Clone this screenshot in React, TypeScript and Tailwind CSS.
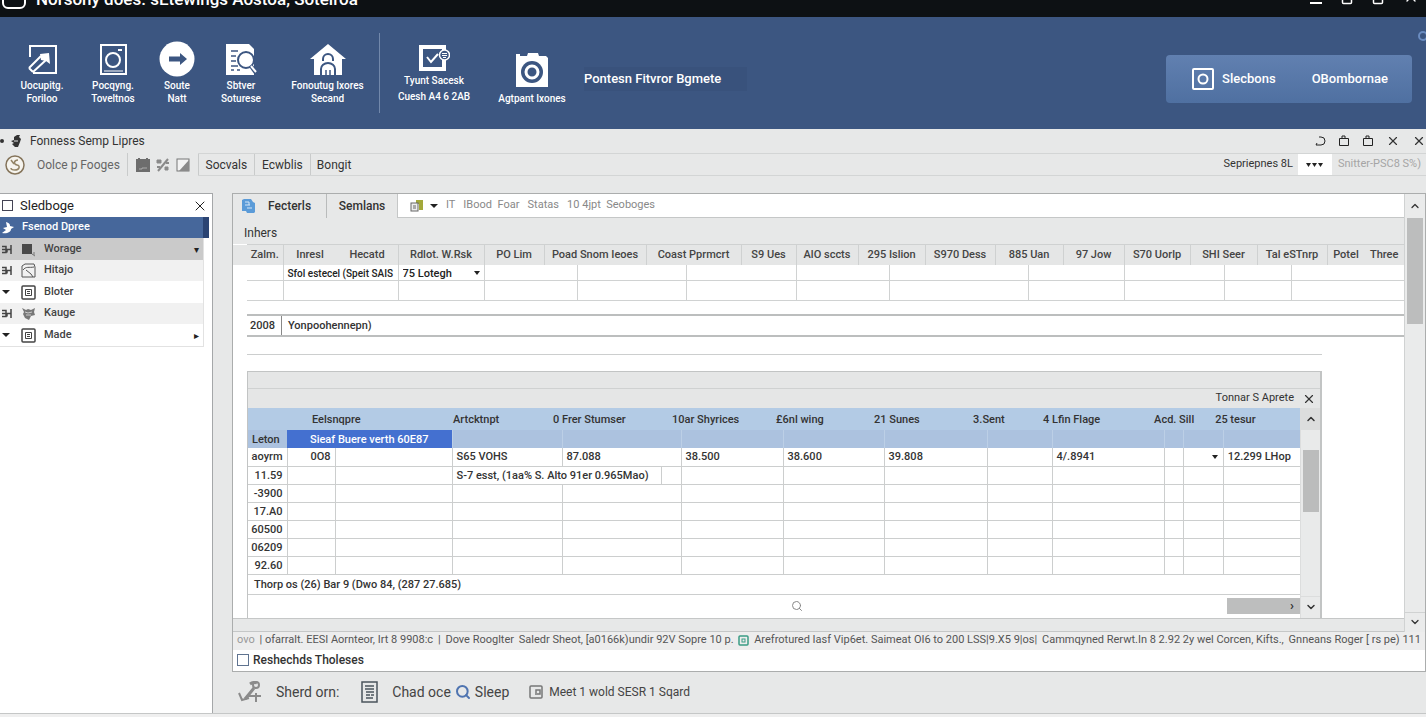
import type { ReactNode } from "react";
import { ChevronDown, ChevronUp, Search, Square, X } from "lucide-react";

interface CellData {
  from: number;
  to: number;
  text?: ReactNode;
}

// Column edges of a table whose header and body cells do not line up.
const makeEdges = (...lists: number[][]) =>
  Array.from(new Set(lists.flat())).sort((a, b) => a - b);

const spanOf = (edges: number[], from: number, to: number) =>
  edges.filter((edge) => edge > from && edge <= to).length;

const Columns = ({ edges }: { edges: number[] }) => (
  <colgroup>
    {edges.slice(1).map((edge, index) => (
      <col key={edge} style={{ width: edge - edges[index] }} />
    ))}
  </colgroup>
);

const toCells = (edges: number[], texts: ReactNode[]): CellData[] =>
  edges.slice(1).map((edge, index) => ({ from: edges[index], to: edge, text: texts[index] }));

/* ---------- icons ---------- */

const DrawIcon = () => (
  <svg viewBox="0 0 31 31" className="h-[31px] w-[31px]" fill="none" stroke="white" strokeWidth="2">
    <path d="M3 13V2h26v27H6" />
    <path d="M2 24 14 12M6 28 19 16M2 24l4 4" />
    <path d="M13 10l9-1 1 11-4-3-5-1z" fill="white" stroke="none" />
  </svg>
);

const CameraFrameIcon = () => (
  <svg viewBox="0 0 27 31" className="h-[31px] w-[27px]" fill="none" stroke="white">
    <rect x="1" y="1" width="25" height="29" strokeWidth="2" />
    <circle cx="13" cy="16" r="7" strokeWidth="2" />
    <path d="M18 6h4" strokeWidth="2" />
    <path d="M4 27h19" strokeWidth="1" />
  </svg>
);

const ArrowCircleIcon = () => (
  <svg viewBox="0 0 36 36" className="h-9 w-9">
    <circle cx="18" cy="18" r="17.5" fill="white" />
    <path d="M10 15.5h11V12l7 6-7 6v-3.5H10z" fill="#3c5681" />
  </svg>
);

const DocSearchIcon = () => (
  <svg viewBox="0 0 32 31" className="h-[31px] w-8">
    <path d="M1 0h23l5 5v26H1z" fill="white" />
    <path d="M6 7h7M6 12h5M6 17h5M6 22h7M6 26h3M12 26h3" stroke="#3c5681" strokeWidth="1.5" />
    <circle cx="21" cy="16" r="8" fill="white" stroke="#3c5681" strokeWidth="2" />
    <path d="M26 22l5 7" stroke="#3c5681" strokeWidth="4" />
    <path d="M26 22l5 6" stroke="white" strokeWidth="2" />
  </svg>
);

const HomeIcon = () => (
  <svg viewBox="0 0 36 31" className="h-[31px] w-9">
    <path d="M18 0 36 15h-4v16H4V15H0z" fill="white" />
    <path d="M13 17v-2a5 5 0 0 1 10 0v2" fill="none" stroke="#3c5681" strokeWidth="2" />
    <path d="M11 31v-6a7 6 0 0 1 14 0v6" fill="none" stroke="#3c5681" strokeWidth="2" />
    <path d="M16 31v-5M20 31v-5" fill="none" stroke="#3c5681" strokeWidth="1.5" />
  </svg>
);

const CheckBadgeIcon = () => (
  <svg viewBox="0 0 31 26" className="h-[26px] w-[31px]" fill="none" stroke="white">
    <rect x="2" y="2" width="23" height="22" strokeWidth="4" />
    <path d="M8 12l4 5 7-8" strokeWidth="2" />
    <circle cx="25.5" cy="10" r="5" fill="#3c5681" strokeWidth="1.5" />
    <path d="M23 8.5h5M23 10.5h5M24 12.5h3" strokeWidth="1" />
  </svg>
);

const CameraIcon = () => (
  <svg viewBox="0 0 32 35" className="h-[35px] w-8">
    <path d="M0 1h4v2h7l1-3h10l1 3h7l2 2v29H0z" fill="white" />
    <circle cx="16" cy="19" r="11" fill="#3c5681" />
    <circle cx="16" cy="19" r="6" fill="none" stroke="white" strokeWidth="3" />
  </svg>
);

const TargetIcon = () => (
  <svg viewBox="0 0 22 22" className="h-[22px] w-[22px]" fill="none" stroke="white" strokeWidth="2">
    <rect x="1" y="1" width="20" height="20" rx="1" />
    <circle cx="11" cy="11" r="4.5" />
  </svg>
);

const BugIcon = () => (
  <svg viewBox="0 0 12 12" className="h-3 w-3" fill="#333">
    <path d="M7 0h3l-1 2 2 2-1 3-2 5H5L2 9l2-1-3-2 3-1V2z" />
    <path d="M4 6h4" stroke="#e7e8e8" strokeWidth="1" />
  </svg>
);

const CoinIcon = () => (
  <svg viewBox="0 0 20 20" className="h-5 w-5" fill="none">
    <circle cx="10" cy="10" r="9" stroke="#85745a" strokeWidth="1.5" fill="#f6f4ee" />
    <path d="M6 5l3 4M13 5c-4 0-5 4-1 5s2 5-2 5-4-2-4-2" stroke="#948567" strokeWidth="1.5" />
  </svg>
);

const NoteIcon = () => (
  <svg viewBox="0 0 14 14" className="h-[14px] w-[14px]">
    <path d="M0 1h2V0h2v1h6V0h2v1h2v13H0z" fill="#6d6d6d" />
    <path d="M3 11h3v-1h5" stroke="#aaa" fill="none" />
  </svg>
);

const SplitIcon = () => (
  <svg viewBox="0 0 14 14" className="h-[14px] w-[14px]" fill="none" stroke="#8a8a8a">
    <path d="M2 13 12 1" strokeWidth="2" />
    <path d="M1 2h4v3H1zM9 9h3v3H9z" fill="#8a8a8a" />
    <path d="M10 5h3M1 9h3" strokeWidth="2" />
  </svg>
);

const ContrastIcon = () => (
  <svg viewBox="0 0 14 14" className="h-[14px] w-[14px]">
    <rect x="1" y="1" width="12" height="12" fill="#f3f3f3" stroke="#777" />
    <path d="M13 2v11H3z" fill="#8a8a8a" />
  </svg>
);

const BlueDocsIcon = () => (
  <svg viewBox="0 0 15 14" className="h-[14px] w-[15px]">
    <path d="M1 1l2-1h7l2 3 2 1v9l-1 1H6l-1-2H1z" fill="#5b9bd8" />
    <path d="M4 3h4v3M4 6h5M6 9h5" stroke="#d5e6f7" fill="none" />
  </svg>
);

const SheetColorIcon = () => (
  <svg viewBox="0 0 14 12" className="h-3 w-[14px]">
    <path d="M6 0h7v10H9V4H6z" fill="#a3a83a" />
    <rect x="1" y="3" width="7" height="8" fill="#eee" stroke="#666" />
    <path d="M3 6h3M3 8h3" stroke="#666" />
  </svg>
);

const FrameIcon = () => (
  <svg viewBox="0 0 15 15" className="h-[15px] w-[15px]" fill="none" stroke="#444">
    <rect x="1" y="1" width="13" height="13" rx="1" strokeWidth="1.5" />
    <path d="M4.5 4.5h6v6h-6zM6 6.5h3M6 8.5h3" />
  </svg>
);

const PictureIcon = () => (
  <svg viewBox="0 0 15 15" className="h-[15px] w-[15px]" fill="none" stroke="#555">
    <path d="M1 3l3-2h9l1 3v10H1zM2 7c3-4 6-2 11-3M5 7l5 4 2 3" />
  </svg>
);

const BlockIcon = () => (
  <svg viewBox="0 0 15 15" className="h-[15px] w-[15px]">
    <rect x="1" y="2" width="10" height="10" fill="#4a4a4a" />
    <path d="M11 12l3 2M13 10v3" stroke="#777" />
  </svg>
);

const PawIcon = () => (
  <svg viewBox="0 0 15 15" className="h-[15px] w-[15px]" fill="#777">
    <path d="M1 2l4 2 2-1 3 1 4-2-1 4 1 3-4 1-2 4-4-2-2-4 1-2z" />
    <path d="M4 6l3 1 4-1M5 9h5" stroke="#ccc" fill="none" />
  </svg>
);

const TreeIcon = () => (
  <svg viewBox="0 0 10 9" className="h-[9px] w-[10px]" fill="none" stroke="#444">
    <path d="M0 1.5h4v6H0M0 4.5h9M5 7.5V5M9 0v9" strokeWidth="1.5" />
  </svg>
);

const BirdIcon = () => (
  <svg viewBox="0 0 12 12" className="h-3 w-3" fill="white">
    <path d="M4 0c4 1 4 3 4 4l4 1-3 2c0 3-4 5-9 4l4-3-3-2 4-1z" />
  </svg>
);

const Caret = ({ size = "h-[5px] w-2" }: { size?: string }) => (
  <svg viewBox="0 0 8 5" className={size} fill="#222" preserveAspectRatio="none">
    <path d="M0 0h8L4 5z" />
  </svg>
);

const BagIcon = () => (
  <svg viewBox="0 0 12 12" className="h-3 w-3" fill="none" stroke="#222">
    <path d="M1.5 3.5h9v7h-9zM4 3V1h3v2" />
  </svg>
);

const ReturnIcon = () => (
  <svg viewBox="0 0 12 12" className="h-3 w-3" fill="none" stroke="#222">
    <path d="M5 2h2a3.5 3.5 0 0 1 0 8H2M3 8l-1 2" />
  </svg>
);

const BranchIcon = () => (
  <svg viewBox="0 0 24 22" className="h-[22px] w-6" fill="none" stroke="#8b8b8b">
    <circle cx="18" cy="4" r="3" strokeWidth="2" />
    <path d="M12 3c3-2 5-2 7-1M16 7l-4 5-5 6" strokeWidth="3" />
    <path d="M1 12l3 7 7-2M9 15h14M18 12v9" strokeWidth="2" />
  </svg>
);

const PageIcon = () => (
  <svg viewBox="0 0 17 22" className="h-[22px] w-[17px]" fill="none" stroke="#4b545c">
    <rect x="1" y="1" width="15" height="20" strokeWidth="1.5" />
    <path d="M4 5h9M4 8h9M5 11h8M5 14h4M10 14h3M5 17h7" strokeWidth="1.5" />
  </svg>
);

/* ---------- ribbon ---------- */

interface RibbonItemProps {
  icon: ReactNode;
  lines: string[];
  className: string;
}

const RibbonItem = ({ icon, lines, className }: RibbonItemProps) => (
  <button type="button" className={`flex shrink-0 flex-col items-center justify-end ${className}`}>
    {icon}
    <span className="flex flex-col items-center whitespace-nowrap">
      {lines.map((line) => (
        <span key={line}>{line}</span>
      ))}
    </span>
  </button>
);

const Ribbon = () => (
  <div className="relative flex h-28 items-center overflow-hidden bg-[#3c5681] pl-1.5 text-white">
    <div className="flex h-full pb-6 text-[10px] leading-[13px] font-medium">
      <RibbonItem className="w-[72px] gap-1" icon={<DrawIcon />} lines={["Uocupitg.", "Foriloo"]} />
      <RibbonItem className="w-[70px] gap-1" icon={<CameraFrameIcon />} lines={["Pocqyng.", "Toveltnos"]} />
      <RibbonItem className="w-[58px] gap-0.5" icon={<ArrowCircleIcon />} lines={["Soute", "Natt"]} />
      <RibbonItem className="w-[70px] gap-1" icon={<DocSearchIcon />} lines={["Sbtver", "Soturese"]} />
      <RibbonItem className="w-[103px] gap-1" icon={<HomeIcon />} lines={["Fonoutug Ixores", "Secand"]} />
    </div>
    <div className="h-20 w-px bg-[#7288ab]" />
    <div className="flex h-full pb-6 text-[10px] leading-[13px] font-medium">
      <RibbonItem className="w-[108px] gap-0.5 leading-4" icon={<CheckBadgeIcon />} lines={["Tyunt Sacesk", "Cuesh A4 6 2AB"]} />
      <RibbonItem className="w-[88px] gap-1" icon={<CameraIcon />} lines={["Agtpant Ixones"]} />
    </div>
    <button type="button" className="mt-3 ml-2 h-6 w-[163px] bg-[#39527c] text-left text-[13px] font-medium">
      Pontesn Fitvror Bgmete
    </button>
    <div className="mt-3 mr-3.5 ml-auto flex h-12 items-center rounded bg-linear-to-b from-[#6180b0] to-[#4f70a1] pr-6 pl-[26px] text-[13px] font-medium">
      <button type="button" className="flex items-center gap-2">
        <TargetIcon />
        Slecbons
      </button>
      <button type="button" className="ml-9">OBombornae</button>
    </div>
    <span className="absolute top-3.5 -right-0.5 h-2.5 w-2.5 rounded-full border-2 border-[#6a8cc0]" />
  </div>
);

/* ---------- sidebar ---------- */

const sideRows = [
  { mark: <TreeIcon />, icon: <BlockIcon />, label: "Worage", bg: "bg-[#cacaca]", end: "▾" },
  { mark: <TreeIcon />, icon: <PictureIcon />, label: "Hitajo", bg: "bg-[#f1f1f1]", end: "" },
  { mark: <Caret size="h-1 w-2" />, icon: <FrameIcon />, label: "Bloter", bg: "bg-white", end: "" },
  { mark: <TreeIcon />, icon: <PawIcon />, label: "Kauge", bg: "bg-[#f1f1f1]", end: "" },
  { mark: <Caret size="h-1 w-2" />, icon: <FrameIcon />, label: "Made", bg: "bg-white", end: "▸" },
];

const Sidebar = () => (
  <aside className="w-[213px] shrink-0 border-t border-r border-[#a5a7a9] bg-white">
    <div className="flex h-[23px] items-center pr-1 pl-0.5">
      <label className="flex items-center gap-[7px] text-[13px]">
        <input type="checkbox" className="h-[11px] w-[11px] appearance-none border border-[#445] bg-white" />
        Sledboge
      </label>
      <button type="button" aria-label="Close panel" className="ml-auto">
        <X className="h-4 w-4" strokeWidth={1.5} />
      </button>
    </div>
    <button
      type="button"
      className="flex h-[21px] w-[209px] items-center gap-2 border-r-[6px] border-[#2b4473] bg-[#46679b] pl-0.5 text-[11px] font-medium text-white"
    >
      <BirdIcon />
      Fsenod Dpree
    </button>
    <ul className="w-[204px] border-r border-b border-[#e2e2e2] text-[11px] font-medium text-[#444]">
      {sideRows.map((row) => (
        <li key={row.label} className={`flex h-[22px] items-center even:h-[21px] ${row.bg}`}>
          <span className="flex w-[21px] justify-start pl-0.5">{row.mark}</span>
          <button type="button" className="flex flex-1 items-center gap-2">
            {row.icon}
            {row.label}
          </button>
          <span className="pr-1 text-[10px] text-[#222]">{row.end}</span>
        </li>
      ))}
    </ul>
  </aside>
);

/* ---------- upper table ---------- */

const upperHeadEdges = [233, 247, 283, 398, 484, 544, 646, 741, 796, 858, 925, 995, 1063, 1124, 1190, 1257, 1327, 1404];
const upperBodyEdges = [233, 247, 283, 398, 484, 577, 686, 796, 889, 1028, 1124, 1224, 1291, 1404];
const upperEdges = makeEdges(upperHeadEdges, upperBodyEdges);

const upperHead = toCells(upperHeadEdges, [
  "",
  "Zalm.",
  <span className="flex justify-around"><span>Inresl</span><span>Hecatd</span></span>,
  "Rdlot. W.Rsk",
  "PO Lim",
  "Poad Snom Ieoes",
  "Coast Pprmcrt",
  "S9 Ues",
  "AlO sccts",
  "295 Islion",
  "S970 Dess",
  "885 Uan",
  "97 Jow",
  "S70 Uorlp",
  "SHI Seer",
  "Tal eSTnrp",
  <span className="flex justify-around"><span>Potel</span><span>Three</span></span>,
]);

const upperBody = toCells(upperBodyEdges, [
  "",
  "",
  <span className="pl-1 text-[10px]">Sfol estecel (Speit SAIS</span>,
  <span className="relative block">
    <select aria-label="Lot" className="block w-full appearance-none bg-transparent pl-1 outline-none">
      <option>75 Lotegh</option>
    </select>
    <span className="absolute top-1 right-1"><Caret size="h-1 w-1.5" /></span>
  </span>,
]);

const UpperTable = () => (
  <table className="w-full table-fixed border-collapse text-[11px] leading-[13px] font-medium text-[#444]">
    <Columns edges={upperEdges} />
    <thead>
      <tr className="h-5 bg-[#e5e6e6]">
        {upperHead.map((cell, index) => (
          <th
            key={cell.from}
            colSpan={spanOf(upperEdges, cell.from, cell.to)}
            className={`border-[#cfd1d1] p-0 text-center font-medium whitespace-nowrap ${index ? "border-t" : ""} ${index > 1 ? "border-l" : ""}`}
          >
            {cell.text}
          </th>
        ))}
      </tr>
    </thead>
    <tbody>
      {[0, 1].map((row) => (
        <tr key={row} className={row ? "h-5" : "h-4"}>
          {upperBody.map((cell, index) => (
            <td
              key={cell.from}
              colSpan={spanOf(upperEdges, cell.from, cell.to)}
              className={`border-[#d0d2d2] p-0 align-bottom whitespace-nowrap text-[#222] ${index ? "border-b" : ""} ${index > 1 ? "border-l" : ""}`}
            >
              {row === 0 ? cell.text : null}
            </td>
          ))}
        </tr>
      ))}
    </tbody>
  </table>
);

/* ---------- lower table ---------- */

const lowerHeadEdges = [248, 312, 453, 553, 672, 776, 874, 973, 1043, 1154, 1215, 1300];
const lowerBodyEdges = [248, 287, 335, 452, 562, 681, 783, 884, 987, 1052, 1164, 1183, 1223, 1300];
const lowerEdges = makeEdges(lowerHeadEdges, lowerBodyEdges, [661]);

const lowerHead = toCells(lowerHeadEdges, [
  "",
  "Eelsnqpre",
  "Artcktnpt",
  "0 Frer Stumser",
  "10ar Shyrices",
  "£6nl wing",
  "21 Sunes",
  "3.Sent",
  "4 Lfin Flage",
  "Acd. Sill",
  "25 tesur",
]);

const lowerFirst = toCells(lowerBodyEdges, [
  "aoyrm",
  "0O8",
  "",
  "S65 VOHS",
  "87.088",
  "38.500",
  "38.600",
  "39.808",
  "",
  "4/.8941",
  "",
  <button type="button" aria-label="Open list" className="ml-auto flex h-4 w-4 items-center justify-center"><Caret size="h-1 w-1.5" /></button>,
  "12.299 LHop",
]);

const noteRow: CellData[] = [
  ...toCells([248, 287, 335, 452], ["11.59"]),
  { from: 452, to: 661, text: "S-7 esst, (1aa% S. Alto 91er 0.965Mao)" },
  ...toCells([661, 681, 783, 884, 987, 1052, 1164, 1183, 1223, 1300], []),
];

const lowerRows: CellData[][] = [
  lowerFirst,
  noteRow,
  ...["-3900", "17.A0", "60500", "06209", "92.60"].map((code) => toCells(lowerBodyEdges, [code])),
];

const LowerTable = () => (
  <table className="w-full table-fixed border-collapse text-[11px] leading-[13px] font-medium text-[#333]">
    <Columns edges={lowerEdges} />
    <thead>
      <tr className="h-[22px] bg-[#b3cbe5]">
        {lowerHead.map((cell) => (
          <th
            key={cell.from}
            colSpan={spanOf(lowerEdges, cell.from, cell.to)}
            className="p-0 text-left font-medium whitespace-nowrap"
          >
            {cell.text}
          </th>
        ))}
      </tr>
      <tr className="h-[18px] bg-[#acc2df]">
        <th colSpan={spanOf(lowerEdges, 248, 287)} className="p-0 pl-1 text-left font-medium">Leton</th>
        <th colSpan={spanOf(lowerEdges, 287, 452)} className="bg-[#4470d0] p-0 text-center font-medium text-white">
          Sieaf Buere verth 60E87
        </th>
        {toCells(lowerBodyEdges.slice(3), []).map((cell) => (
          <th
            key={cell.from}
            colSpan={spanOf(lowerEdges, cell.from, cell.to)}
            className="border-l border-[#bccfe6] p-0"
          />
        ))}
      </tr>
    </thead>
    <tbody>
      {lowerRows.map((row, rowIndex) => (
        <tr key={rowIndex} className="h-[18px]">
          {row.map((cell, index) => (
            <td
              key={cell.from}
              colSpan={spanOf(lowerEdges, cell.from, cell.to)}
              className={`border-b border-[#cccece] p-0 whitespace-nowrap ${index ? "border-l" : ""} ${index < 2 ? "pr-1 text-right" : "pl-1"}`}
            >
              {cell.text}
            </td>
          ))}
        </tr>
      ))}
      <tr className="h-5">
        <td colSpan={lowerEdges.length - 1} className="border-b border-[#cccece] p-0 pl-1.5">
          Thorp os (26) Bar 9 (Dwo 84, (287 27.685)
        </td>
      </tr>
    </tbody>
  </table>
);

const DataWindow = () => (
  <section className="mt-4 mr-[82px] border-t border-r-2 border-l border-[#c2c4c4]">
    <div className="h-[17px] border-b border-[#cfd1d1] bg-[#e5e6e6]" />
    <div className="flex h-[19px] items-center justify-end gap-2 bg-[#e5e6e6] pr-1 text-[11px] text-[#333]">
      Tonnar S Aprete
      <button type="button" aria-label="Close window">
        <X className="h-3.5 w-3.5" strokeWidth={2} />
      </button>
    </div>
    <div className="flex">
      <div className="min-w-0 flex-1">
        <LowerTable />
        <div className="flex h-[23px] items-center pl-[46px]">
          <div className="flex-1" />
          <Search className="h-3 w-3 text-[#888]" />
          <div className="flex flex-1 justify-end">
            <button type="button" aria-label="Scroll right" className="h-4 w-[73px] bg-[#bdbebe] pr-1.5 text-right text-[13px] leading-3 font-bold text-[#333]">
              ›
            </button>
          </div>
        </div>
      </div>
      <div className="flex w-5 shrink-0 flex-col items-center border-l border-[#dcdddd] bg-[#e9eaea]">
        <button type="button" aria-label="Scroll up" className="flex h-[22px] w-full items-center justify-center bg-[#dcdddd]">
          <ChevronUp className="h-3 w-3" strokeWidth={3} />
        </button>
        <div className="mt-5 h-[62px] w-4 bg-[#bbbcbc]" />
        <button type="button" aria-label="Scroll down" className="mt-auto flex h-[22px] w-full items-center justify-center border-t border-[#dcdddd]">
          <ChevronDown className="h-3 w-3" strokeWidth={3} />
        </button>
      </div>
    </div>
  </section>
);

/* ---------- main panel ---------- */

const TabBar = () => (
  <div className="flex h-6 items-stretch text-[12px] font-medium">
    <button type="button" className="flex w-[94px] items-center gap-3 border-r border-[#b9bbbb] pl-2">
      <BlueDocsIcon />
      Fecterls
    </button>
    <button type="button" className="flex w-[70px] items-center justify-center">Semlans</button>
    <div className="flex flex-1 items-center gap-2 border-b border-l border-[#c5c7c7] bg-white pl-3">
      <button type="button" aria-label="Sheet type" className="flex items-center gap-1.5">
        <SheetColorIcon />
        <Caret size="h-1 w-2" />
      </button>
      <input
        type="text"
        aria-label="Sheet address"
        defaultValue="IT   IBood  Foar   Statas   10 4jpt  Seoboges"
        className="flex-1 text-[11px] font-normal text-[#888] outline-none"
      />
    </div>
  </div>
);

const StatusBar = () => (
  <div className="flex h-[18px] items-center justify-between gap-1 overflow-hidden bg-[#ededed] px-1 text-[11px] whitespace-nowrap text-[#555]">
    <span className="text-[#999]">ovo</span>
    <span>| ofarralt. EESI Aornteor, Irt 8 9908:c</span>
    <span>|</span>
    <span>Dove Rooglter</span>
    <span>Saledr Sheot, [a0166k)undir 92V Sopre 10 p.</span>
    <svg viewBox="0 0 11 11" className="h-[11px] w-[11px] shrink-0" fill="none" stroke="#3a9c84">
      <rect x="1" y="1" width="9" height="9" rx="1" strokeWidth="1.5" />
      <rect x="4" y="4" width="3" height="3" />
    </svg>
    <span>Arefrotured Iasf Vip6et. Saimeat OI6 to 200 LSS|9.X5 9|os|</span>
    <span>Cammqyned Rerwt.In 8 2.92 2y wel Corcen, Kifts.,</span>
    <span>Gnneans Roger [ rs pe) 111</span>
  </div>
);

const MainPanel = () => (
  <main className="flex min-w-0 flex-col border border-[#abadad] text-[#333]">
    <div className="flex">
      <div className="min-w-0 flex-1">
        <TabBar />
        <h2 className="flex h-[26px] items-center pt-1 pl-[11px] text-[12px] leading-4">Inhers</h2>
        <div className="bg-white">
          <UpperTable />
          <div className="mt-[13px] ml-3.5 flex h-[23px] items-stretch border-y-2 border-[#bcbebe] text-[11px] leading-[19px] font-medium">
            <span className="w-[35px] border-r border-[#888] pl-[3px]">2008</span>
            <span className="pl-1.5">Yonpoohennepn)</span>
          </div>
          <div className="mt-[17px] mr-[82px] ml-3.5 h-px bg-[#cccece]" />
          <div className="ml-3.5">
            <DataWindow />
          </div>
        </div>
        <div className="h-3.5 border-y border-[#c5c7c7]" />
      </div>
      <div className="flex w-[21px] shrink-0 flex-col items-center border-l border-[#d0d2d2] bg-[#eaebeb]">
        <button type="button" aria-label="Scroll up" className="flex h-6 w-full items-center justify-center">
          <ChevronUp className="h-3 w-3" strokeWidth={2.5} />
        </button>
        <div className="h-[106px] w-4 bg-[#bcbdbd]" />
        <button type="button" aria-label="Scroll down" className="mt-auto flex h-5 w-full items-center justify-center border-t border-[#d0d2d2]">
          <ChevronDown className="h-3 w-3" strokeWidth={2.5} />
        </button>
      </div>
    </div>
    <StatusBar />
    <div className="flex h-[21px] items-center bg-white pl-1">
      <label className="flex items-center gap-1 text-[12px] font-medium">
        <input type="checkbox" className="h-3 w-3 appearance-none border border-[#5f7390] bg-white" />
        Reshechds Tholeses
      </label>
    </div>
  </main>
);

const Footer = () => (
  <footer className="flex flex-1 items-center pl-1.5 text-[14px] text-[#444]">
    <BranchIcon />
    <span className="ml-3.5">Sherd orn:</span>
    <span className="ml-[22px]"><PageIcon /></span>
    <button type="button" className="ml-3.5">Chad oce</button>
    <button type="button" className="ml-1 flex items-center gap-1">
      <Search className="h-4 w-4 text-[#4f74b0]" strokeWidth={3} />
      Sleep
    </button>
    <button type="button" className="ml-5 flex items-center gap-1.5 text-[12px]">
      <svg viewBox="0 0 14 14" className="h-[14px] w-[14px]" fill="none" stroke="#777" strokeWidth="1.5">
        <rect x="1" y="1" width="12" height="12" rx="1" />
        <path d="M7 10V5h4v4H8" />
      </svg>
      Meet 1 wold SESR 1 Sqard
    </button>
  </footer>
);

/* ---------- page ---------- */

const TitleBar = () => (
  <header className="flex h-[17px] items-end overflow-hidden bg-[#0d1114] pb-2 pl-0.5 text-white">
    <span className="flex h-6 w-6 shrink-0 items-end justify-center rounded-md border-2 border-white pb-2">
      <span className="h-1 w-1 rounded-full bg-white" />
    </span>
    <h1 className="ml-2.5 text-[17px] leading-5 font-medium whitespace-nowrap">
      Norsony does. sEtewings Aostoa, Soteiroa
    </h1>
    <div className="mr-[7px] mb-1 ml-auto flex items-end gap-[19px]">
      <button type="button" aria-label="Minimize" className="flex h-1 w-3 items-center">
        <span className="h-0.5 w-full bg-white" />
      </button>
      <button type="button" aria-label="Restore"><Square className="h-3 w-3" strokeWidth={3} /></button>
      <button type="button" aria-label="Maximize"><Square className="h-3 w-3" strokeWidth={3} /></button>
      <button type="button" aria-label="Close"><X className="h-4 w-4" /></button>
    </div>
  </header>
);

const DocumentBar = () => (
  <div className="flex h-6 items-center overflow-hidden text-[12px] text-[#333]">
    <span className="h-1 w-1 rounded-full bg-[#333]" />
    <span className="ml-1.5"><BugIcon /></span>
    <h2 className="ml-2">Fonness Semp Lipres</h2>
    <div className="ml-auto flex items-center gap-3">
      <button type="button" aria-label="Undo"><ReturnIcon /></button>
      <button type="button" aria-label="Dock"><BagIcon /></button>
      <button type="button" aria-label="Float"><BagIcon /></button>
      <button type="button" aria-label="Close document"><X className="h-3.5 w-3.5" strokeWidth={2} /></button>
      <button type="button" aria-label="Close all"><X className="h-3.5 w-3.5" strokeWidth={2} /></button>
    </div>
  </div>
);

const ToolBar = () => (
  <div className="flex h-[23px] items-stretch text-[12px] text-[#333]">
    <div className="flex items-center gap-3 pr-[7px] pl-[5px] text-[#666]">
      <CoinIcon />
      Oolce p Fooges
    </div>
    <div className="flex items-center gap-1.5 border-l border-[#c9cbcb] px-2">
      <button type="button" aria-label="Note"><NoteIcon /></button>
      <button type="button" aria-label="Split"><SplitIcon /></button>
      <button type="button" aria-label="Contrast"><ContrastIcon /></button>
    </div>
    <div className="flex flex-1 items-stretch border-y border-[#d3d5d5]">
      <button type="button" className="w-14 border-l border-[#c9cbcb]">Socvals</button>
      <button type="button" className="w-14 border-l border-[#c9cbcb]">Ecwblis</button>
      <button type="button" className="border-l border-[#c9cbcb] pl-1.5">Bongit</button>
      <button type="button" className="mr-[5px] ml-auto text-[11px]">Sepriepnes 8L</button>
      <button type="button" aria-label="More" className="flex w-[34px] items-center justify-center gap-px bg-white">
        <Caret size="h-1 w-[5px]" />
        <Caret size="h-1 w-[5px]" />
        <Caret size="h-1 w-[5px]" />
      </button>
      <span className="flex items-center pr-[5px] pl-1.5 text-[11px] text-[#a5a5a5]">Snitter-PSC8 S%)</span>
    </div>
  </div>
);

export default function App() {
  return (
    <div className="flex min-h-screen flex-col overflow-hidden bg-[#e7e8e8] font-[Roboto,'Liberation_Sans',sans-serif] text-[#222]">
      <TitleBar />
      <Ribbon />
      <DocumentBar />
      <ToolBar />
      <div className="mt-[17px] flex flex-1 border-b border-[#c5c7c7]">
        <Sidebar />
        <div className="ml-[19px] flex min-w-0 flex-1 flex-col">
          <MainPanel />
          <Footer />
        </div>
      </div>
      <div className="h-[3px] bg-[#efefef]" />
    </div>
  );
}
